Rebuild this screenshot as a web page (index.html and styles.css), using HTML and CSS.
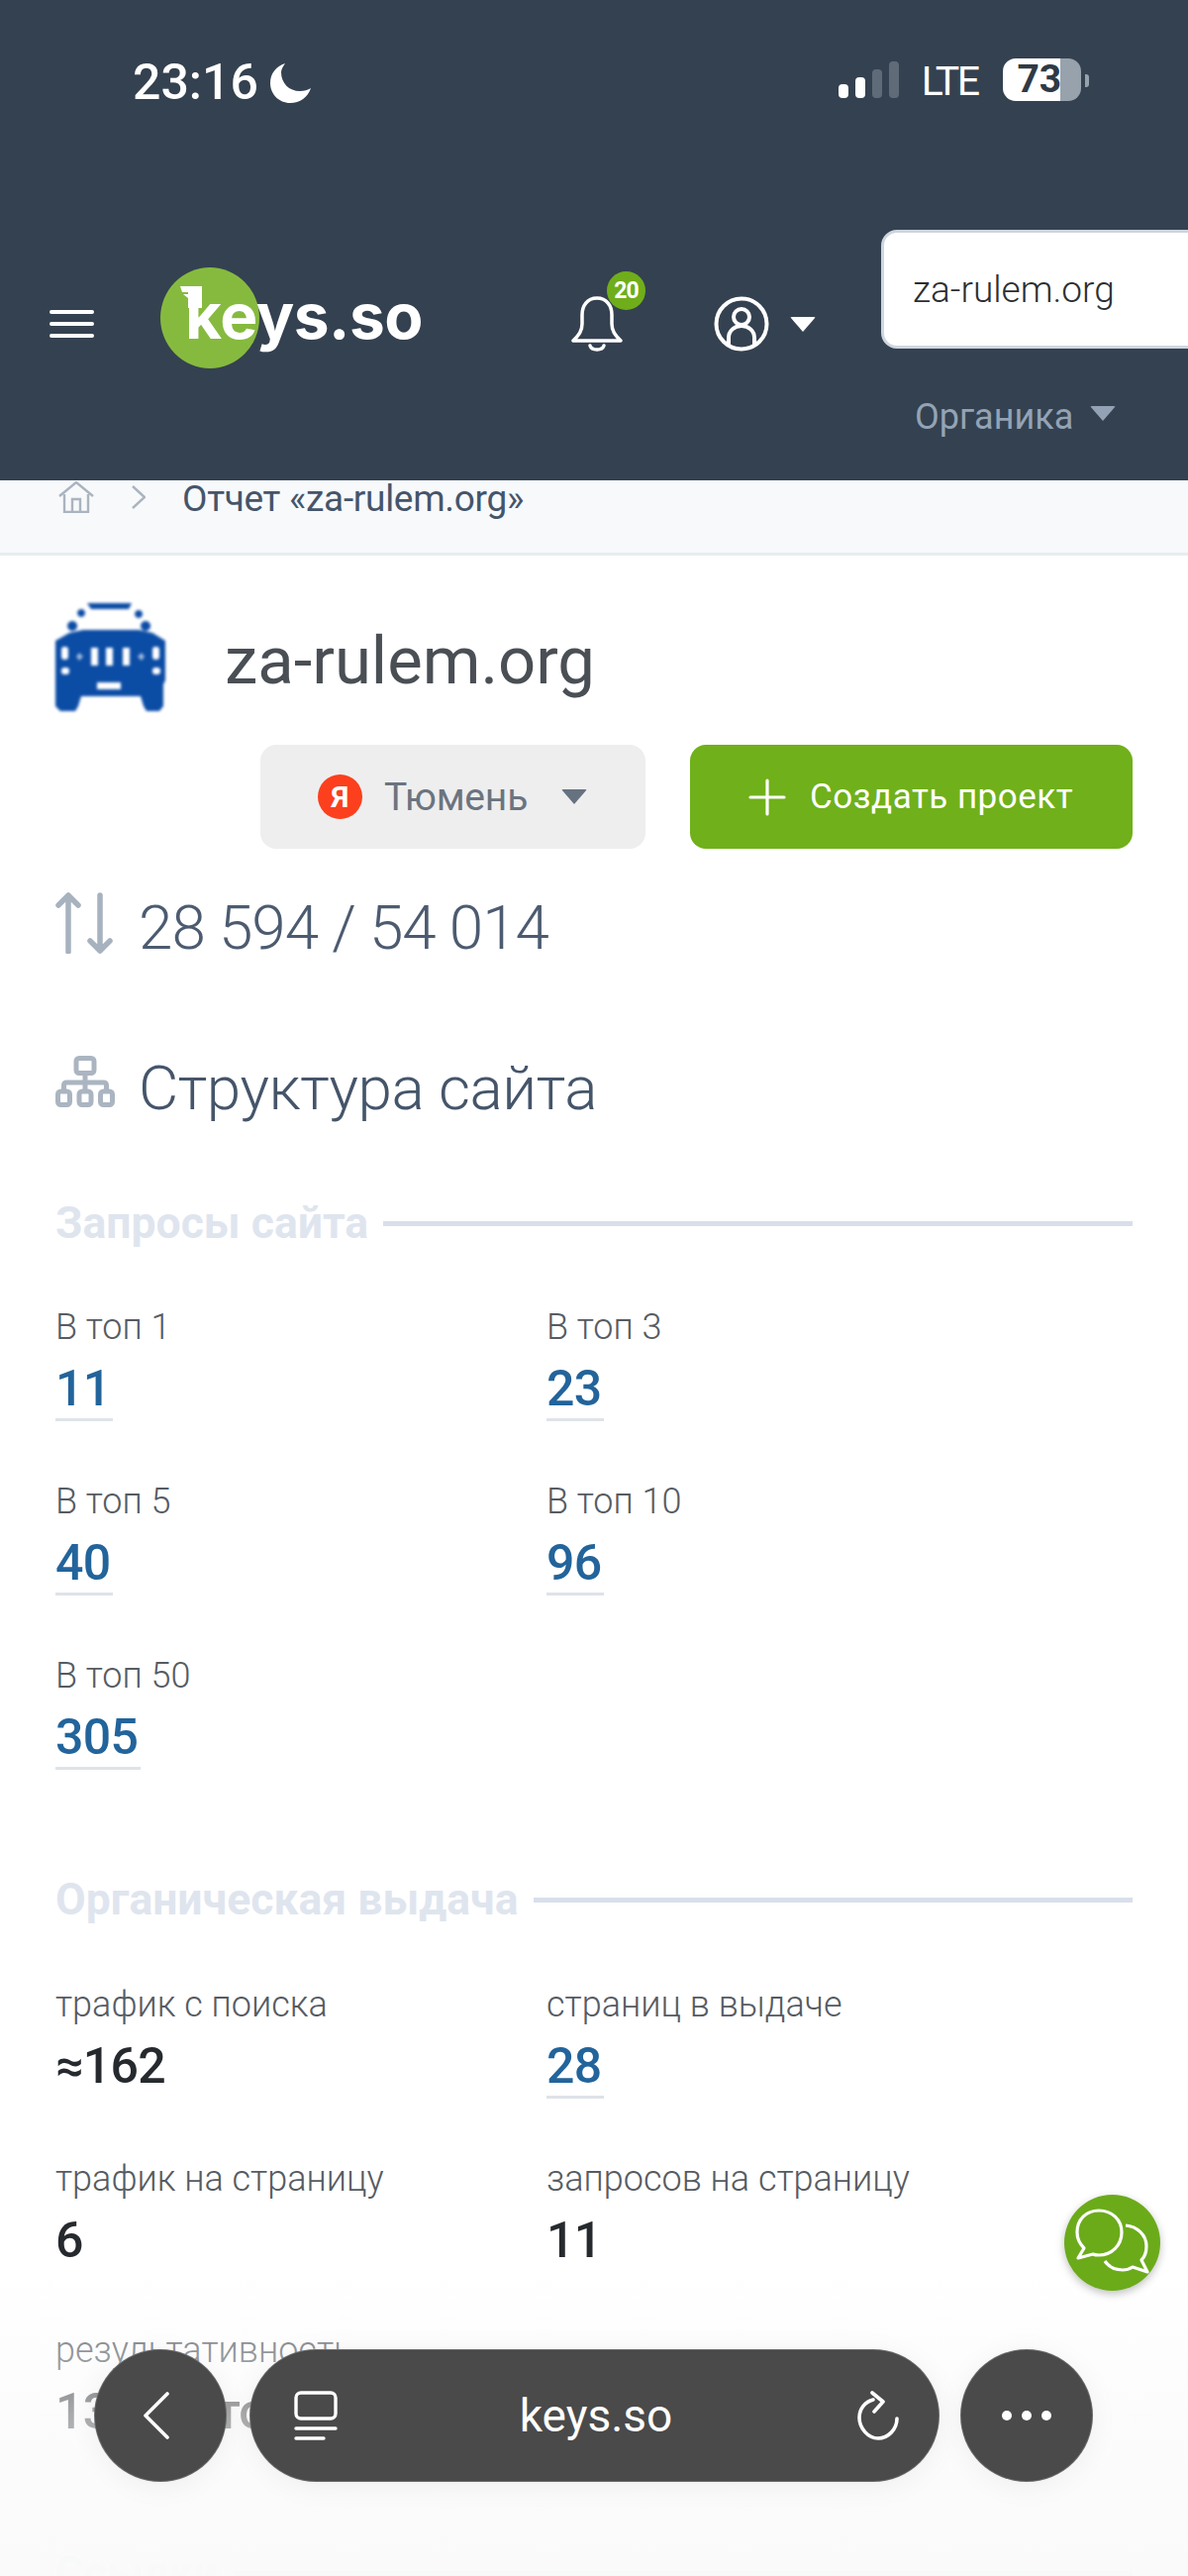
FILE: index.html
```html
<!DOCTYPE html>
<html lang="ru">
<head>
  <meta charset="UTF-8" />
  <meta name="viewport" content="width=device-width, initial-scale=1" />
  <title>Отчет «za-rulem.org»</title>
  <link rel="stylesheet" href="styles.css">
</head>
<body>

  <header class="header">
    <div class="statusbar">
      <div class="status-time">
        <span>23:16</span>
        <svg class="moon" viewBox="0 0 41 40"><path fill="#fff" d="M15 0C6 3 0 10 0 20c0 11 9 20 20 20 10 0 18-6 21-15-3 2-7 3-11 3-11 0-19-8-19-19 0-3 2-6 4-9z"/></svg>
      </div>
      <div class="status-right">
        <div class="signal">
          <span class="bar bar-1"></span>
          <span class="bar bar-2"></span>
          <span class="bar bar-3"></span>
          <span class="bar bar-4"></span>
        </div>
        <span class="lte">LTE</span>
        <div class="battery"><span class="battery-level">73</span></div>
      </div>
    </div>

    <div class="navbar">
      <div class="nav-icons">
        <div class="burger"><span></span><span></span><span></span></div>
        <a class="logo">
          <span class="logo-circle"></span>
          <svg class="logo-key" viewBox="0 0 22 22"><path fill="#fff" d="M0 0h22v22H8v-10L3 8h5V6H2z"/></svg>
          <span class="logo-text">keys.so</span>
        </a>
        <div class="bell">
          <svg viewBox="0 0 52 58"><g fill="none" stroke="#fff" stroke-width="3.5" stroke-linecap="round" stroke-linejoin="round"><path d="M26 4c-10 0-15 8-15 17v9c0 7-3 11-9 17h48c-6-6-9-10-9-17v-9C41 12 36 4 26 4z"/><path d="M19 52c1 3 4 4 7 4s6-1 7-4"/></g></svg>
          <span class="bell-badge">20</span>
        </div>
        <div class="user">
          <svg viewBox="0 0 56 56"><g fill="none" stroke="#fff" stroke-width="4"><circle cx="28" cy="28" r="25.500"/><circle cx="28" cy="21" r="8"/><path d="M15 50V42c0-7 6-12 13-12s13 5 13 12v8"/></g></svg>
          <span class="caret caret-white"></span>
        </div>
      </div>
      <div class="nav-search">
        <div class="search-input">za-rulem.org</div>
        <div class="search-type">Органика <span class="caret caret-grey"></span></div>
      </div>
    </div>
  </header>

  <nav class="breadcrumbs">
    <svg class="crumb-home" viewBox="0 0 36 32"><g fill="none" stroke="#aab4bf" stroke-width="2.4"><path d="M1 15 18 1l17 14"/><path d="M6 13v18h24V13"/><path d="M14 31V18h8v13"/></g></svg>
    <svg class="crumb-sep" viewBox="0 0 14 24"><path fill="none" stroke="#aab4bf" stroke-width="2.4" d="M1 1l12 11L1 23"/></svg>
    <span class="crumb-text">Отчет «za-rulem.org»</span>
  </nav>

  <main class="report">
    <div class="site-title">
      <svg class="favicon" viewBox="0 0 112 110">
        <path fill="#0b4ca5" d="M32 0h45l-3 6H36zM26 6a4 4 0 1 0 .1 0zM84 7a4 4 0 1 0 .1 0zM17 18a5 5 0 1 0 .1 0zM91 18a5 5 0 1 0 .1 0zM14 30l14-3h56l14 3 13 8v40l-2 4v22l-4 5H92l-3-5-3-10H26l-3 10-3 5H5l-5-5V38z"/>
        <g fill="#fff">
          <rect x="6" y="44" width="7" height="13" rx="3"/>
          <rect x="98" y="44" width="7" height="13" rx="3"/>
          <rect x="6" y="65" width="8" height="7" rx="3"/>
          <rect x="98" y="65" width="8" height="7" rx="3"/>
          <rect x="36" y="45" width="7" height="18"/>
          <rect x="51" y="45" width="7" height="18"/>
          <rect x="68" y="45" width="7" height="18"/>
          <path opacity="0.6" d="M24 50l4 4-4 4-3-4zM87 50l3 4-3 4-4-4z"/>
          <rect x="42" y="80" width="24" height="7"/>
        </g>
      </svg>
      <h1 class="site-name">za-rulem.org</h1>
    </div>

    <div class="actions">
      <button class="btn-region">
        <span class="ya-icon">Я</span>
        <span class="region-name">Тюмень</span>
        <span class="caret caret-dark"></span>
      </button>
      <button class="btn-create">
        <svg viewBox="0 0 38 38"><path fill="none" stroke="#fff" stroke-width="3.2" stroke-linecap="round" d="M19 2v34M2 19h34"/></svg>
        Создать проект
      </button>
    </div>

    <div class="visits">
      <svg class="icon-arrows" viewBox="0 0 60 62"><g fill="none" stroke="#a7b2bf" stroke-width="5.5" stroke-linecap="round" stroke-linejoin="round"><path d="M13 60V3M3 13 13 3l10 10"/><path d="M45 3v56M35 49l10 10 10-10"/></g></svg>
      <span class="visits-text">28 594 / 54 014</span>
    </div>

    <div class="structure-title">
      <svg class="icon-tree" viewBox="0 0 60 52"><g fill="none" stroke="#abb5c1" stroke-width="5" stroke-linejoin="round"><rect x="21" y="2.500" width="18" height="15" rx="3"/><rect x="2.500" y="36" width="12" height="13.500" rx="3"/><rect x="24" y="36" width="12" height="13.500" rx="3"/><rect x="45.500" y="36" width="12" height="13.500" rx="3"/><path d="M30 17v19M8.500 36v-6c0-2 1-3 3-3h37c2 0 3 1 3 3v6"/></g></svg>
      <h2>Структура сайта</h2>
    </div>

    <section class="stats-section">
      <h3 class="section-head"><span>Запросы сайта</span></h3>
      <div class="stats-grid">
        <div class="stat"><div class="stat-label">В топ 1</div><a class="stat-value link">11</a></div>
        <div class="stat"><div class="stat-label">В топ 3</div><a class="stat-value link">23</a></div>
        <div class="stat"><div class="stat-label">В топ 5</div><a class="stat-value link">40</a></div>
        <div class="stat"><div class="stat-label">В топ 10</div><a class="stat-value link">96</a></div>
        <div class="stat"><div class="stat-label">В топ 50</div><a class="stat-value link">305</a></div>
      </div>
    </section>

    <section class="stats-section section-organic">
      <h3 class="section-head"><span>Органическая выдача</span></h3>
      <div class="stats-grid">
        <div class="stat"><div class="stat-label">трафик с поиска</div><div class="stat-value">≈162</div></div>
        <div class="stat"><div class="stat-label">страниц в выдаче</div><a class="stat-value link">28</a></div>
        <div class="stat"><div class="stat-label">трафик на страницу</div><div class="stat-value">6</div></div>
        <div class="stat"><div class="stat-label">запросов на страницу</div><div class="stat-value">11</div></div>
        <div class="stat"><div class="stat-label">результативность</div><div class="stat-value">13 880 топ</div></div>
      </div>
    </section>

    <section class="stats-section section-links">
      <h3 class="section-head"><span>Ссылки</span></h3>
    </section>
  </main>

  <div class="bottom-fade"></div>

  <a class="chat-btn">
    <svg viewBox="0 0 76 70"><g fill="none" stroke="#fff" stroke-width="3.2" stroke-linejoin="round"><path d="M24 2C11 2 2 11 2 24c0 7 3 12 7 16L3 50l15-4c2 1 4 1 6 1 13 0 23-10 23-23S37 2 24 2z"/><path d="M51 17c11 1 21 9 21 21 0 6-2 11-5 14l6 12-15-5c-3 2-6 3-10 3-8 0-14-3-18-9"/></g></svg>
  </a>

  <div class="browser-bar">
    <button class="bar-round">
      <svg class="icon-back" viewBox="0 0 26 48"><path fill="none" stroke="#fff" stroke-width="3.6" stroke-linecap="round" stroke-linejoin="round" d="M24 2 2 24l22 22"/></svg>
    </button>
    <div class="bar-address">
      <svg class="icon-tabs" viewBox="0 0 44 50"><g fill="none" stroke="#fff" stroke-width="3.4" stroke-linecap="round"><rect x="2" y="2" width="40" height="26" rx="5"/><path d="M2 38h40M2 48h28"/></g></svg>
      <span class="address-text">keys.so</span>
      <svg class="icon-reload" viewBox="0 0 42 50"><g fill="none" stroke="#fff" stroke-width="3.6" stroke-linecap="round" stroke-linejoin="round"><path d="M16 9C8 11 2 18 2 27c0 11 9 21 19 21s19-9 19-20"/><path d="M15 2l11 9-9 10"/></g></svg>
    </div>
    <button class="bar-round">
      <span class="dots"><i></i><i></i><i></i></span>
    </button>
  </div>

</body>
</html>
```

FILE: styles.css
```css
body {
  margin: 0;
  width: 1200px;
  height: 2601px;
  position: relative;
  overflow: hidden;
  font-family: Roboto, "Liberation Sans", sans-serif;
  background: #fff;
  color: #45556a;
}

h1, h2, h3 {
  margin: 0;
  font-weight: 400;
}

button {
  border: none;
  font-family: inherit;
  cursor: pointer;
}

/* header */

.header {
  height: 485px;
  background: #344150;
  color: #fff;
  overflow: hidden;
}

.statusbar {
  height: 232px;
  box-sizing: border-box;
  padding-top: 59px;
  display: flex;
  align-items: flex-start;
}

.status-time {
  display: flex;
  align-items: center;
  gap: 12px;
  margin-left: 134px;
  margin-top: 3px;
  font-size: 50px;
  line-height: 43px;
  font-weight: 500;
}

.moon {
  width: 41px;
  height: 40px;
}

.status-right {
  display: flex;
  margin-left: 533px;
  height: 43px;
}

.signal {
  display: flex;
  align-items: flex-end;
  gap: 7px;
  height: 37px;
  margin-top: 3px;
}

.bar {
  width: 10px;
  border-radius: 4px;
  background: #fff;
}

.bar-1 { height: 14px; }
.bar-2 { height: 21px; }
.bar-3 { height: 29px; background: #5f6b78; }
.bar-4 { height: 37px; background: #5f6b78; }

.lte {
  margin-left: 23px;
  font-size: 41px;
  line-height: 47px;
  font-weight: 400;
  letter-spacing: -2.600px;
}

.battery {
  position: relative;
  width: 79px;
  height: 43px;
  margin-left: 26px;
  border-radius: 13px;
  background: linear-gradient(to right, #fff 73%, #98a2ad 73%);
}

.battery:after {
  content: "";
  position: absolute;
  top: 16px;
  right: -8px;
  width: 4px;
  height: 13px;
  border-radius: 0 3px 3px 0;
  background: #98a2ad;
}

.battery-level {
  display: block;
  margin-left: 14px;
  font-size: 39px;
  line-height: 43px;
  font-weight: 700;
  color: #2f3a46;
}

.navbar {
  display: flex;
  align-items: flex-start;
}

.nav-icons {
  display: flex;
  align-items: center;
  width: 890px;
  height: 110px;
  margin-top: 40px;
  flex-shrink: 0;
}

.burger {
  display: flex;
  flex-direction: column;
  gap: 8px;
  width: 45px;
  margin-left: 50px;
}

.burger span {
  height: 4px;
  border-radius: 2px;
  background: #fff;
}

.logo {
  position: relative;
  margin-left: 92px;
  margin-top: -17px;
  height: 80px;
  width: 243px;
}

.logo-circle {
  position: absolute;
  top: -9px;
  left: -25px;
  width: 100px;
  height: 102px;
  border-radius: 50%;
  background: #86ba3f;
}

.logo-key {
  position: absolute;
  top: 10px;
  left: -5px;
  width: 22px;
  height: 22px;
}

.logo-text {
  position: relative;
  display: block;
  font-family: Inter, Roboto, sans-serif;
  font-size: 64px;
  line-height: 80px;
  font-weight: 700;
  letter-spacing: -0.5px;
  color: #fff;
}

.bell {
  position: relative;
  width: 52px;
  height: 58px;
  margin-left: 147px;
  margin-top: -2px;
}

.bell svg {
  display: block;
  width: 52px;
  height: 58px;
}

.bell-badge {
  position: absolute;
  top: -23px;
  left: 36px;
  width: 39px;
  height: 39px;
  border-radius: 50%;
  background: #6fae1a;
  font-size: 23px;
  line-height: 39px;
  font-weight: 700;
  letter-spacing: -1px;
  text-align: center;
}

.user {
  display: flex;
  align-items: center;
  margin-left: 92px;
}

.user svg {
  width: 56px;
  height: 56px;
}

.caret {
  display: inline-block;
  width: 0;
  height: 0;
  border-left: 13px solid transparent;
  border-right: 13px solid transparent;
  border-top: 15px solid #fff;
  border-radius: 2px;
}

.caret-white { margin-left: 21px; }
.caret-grey { border-top-color: #93a3b5; margin-left: 17px; margin-bottom: 8px; }
.caret-dark { border-top-color: #667280; }

.nav-search {
  flex-shrink: 0;
}

.search-input {
  width: 400px;
  height: 120px;
  box-sizing: border-box;
  padding-left: 29px;
  border: 3px solid #cdd6e0;
  border-radius: 16px;
  background: #fff;
  color: #2b2f33;
  font-size: 37px;
  line-height: 116px;
  font-weight: 300;
}

.search-type {
  margin-top: 45px;
  margin-left: 34px;
  font-size: 36px;
  line-height: 48px;
  font-weight: 400;
  color: #93a3b5;
  display: flex;
  align-items: center;
}

/* breadcrumbs */

.breadcrumbs {
  height: 73px;
  display: flex;
  align-items: flex-start;
  background: #f7f9fb;
  border-bottom: 3px solid #e8ecef;
  padding-left: 59px;
}

.crumb-home {
  width: 36px;
  height: 32px;
  margin-top: 1px;
}

.crumb-sep {
  width: 14px;
  height: 24px;
  margin-left: 38px;
  margin-top: 5px;
}

.crumb-text {
  margin-left: 37px;
  margin-top: 1px;
  font-size: 37px;
  line-height: 36px;
  letter-spacing: -0.3px;
  color: #45556a;
}

/* report */

.report {
  padding: 48px 56px 0;
}

.site-title {
  display: flex;
  align-items: center;
}

.favicon {
  width: 112px;
  height: 110px;
  filter: blur(1.6px);
  flex-shrink: 0;
}

.site-name {
  margin-left: 59px;
  margin-top: 6px;
  font-size: 67px;
  line-height: 80px;
  color: #4a4f55;
}

.actions {
  display: flex;
  gap: 45px;
  margin-top: 33px;
  margin-left: 207px;
}

.btn-region {
  display: flex;
  align-items: center;
  width: 389px;
  height: 105px;
  padding: 0 0 0 58px;
  border-radius: 16px;
  background: #eeeeee;
}

.ya-icon {
  width: 45px;
  height: 45px;
  border-radius: 50%;
  background: #fc3f1d;
  color: #fff;
  font-size: 30px;
  line-height: 46px;
  font-weight: 700;
  text-align: center;
}

.region-name {
  margin-left: 22px;
  margin-right: 34px;
  font-size: 39px;
  letter-spacing: -0.2px;
  color: #6b7480;
}

.btn-create {
  display: flex;
  align-items: center;
  gap: 24px;
  width: 447px;
  height: 105px;
  padding: 0 0 0 59px;
  border-radius: 16px;
  background: #70b01a;
  color: #fff;
  font-size: 35px;
  letter-spacing: 0.5px;
}

.btn-create svg {
  width: 38px;
  height: 38px;
}

.visits {
  display: flex;
  align-items: flex-start;
  gap: 24px;
  margin-top: 42px;
  font-size: 62px;
  line-height: 64px;
  font-weight: 300;
  letter-spacing: -1px;
  color: #4c5b70;
}

.visits-text {
  margin-top: 6px;
}

.icon-arrows {
  width: 60px;
  height: 62px;
  margin-top: 2px;
}

.structure-title {
  display: flex;
  align-items: center;
  gap: 24px;
  margin-top: 95px;
}

.icon-tree {
  width: 60px;
  height: 52px;
  margin-bottom: 14px;
}

.structure-title h2 {
  font-size: 62px;
  line-height: 70px;
  font-weight: 300;
  letter-spacing: -0.45px;
  color: #45556a;
}

/* stats */

.stats-section {
  margin-top: 76px;
}

.section-organic {
  margin-top: 106px;
}

.section-organic .stats-grid {
  margin-top: 59px;
}

.section-links {
  margin-top: 108px;
}

.section-head {
  display: flex;
  align-items: center;
  gap: 15px;
  font-size: 44.500px;
  line-height: 50px;
  font-weight: 700;
  color: #dfe5ee;
}

.section-head:after {
  content: "";
  flex: 1;
  height: 5px;
  background: #d8dfeb;
}

.stats-grid {
  display: grid;
  grid-template-columns: 496px 1fr;
  row-gap: 59px;
  margin-top: 58px;
}

.stat-label {
  font-size: 36px;
  line-height: 44px;
  font-weight: 300;
  color: #565b62;
}

.stat-value {
  display: block;
  margin-top: 10px;
  font-size: 50px;
  line-height: 60px;
  font-weight: 500;
  letter-spacing: -0.7px;
  color: #262a2e;
}

.stat-value.link {
  display: table;
  padding-right: 3px;
  color: #22649b;
  border-bottom: 3px solid #dfe3e8;
}

/* floating bits over the page */

.bottom-fade {
  position: absolute;
  left: 0;
  right: 0;
  top: 2290px;
  bottom: 0;
  background: linear-gradient(to bottom, rgba(250, 250, 250, 0), rgba(250, 250, 250, 0.37) 27%, rgba(250, 250, 250, 0.62) 48%, rgba(250, 250, 250, 0.95) 96%);
}

.chat-btn {
  position: absolute;
  left: 1075px;
  top: 2216px;
  width: 97px;
  height: 97px;
  border-radius: 50%;
  background: #6bab1a;
  box-shadow: 0 3px 8px rgba(0, 0, 0, 0.25);
  display: flex;
  align-items: center;
  justify-content: center;
}

.chat-btn svg {
  width: 76px;
  height: 70px;
}

.browser-bar {
  position: absolute;
  left: 96px;
  top: 2373px;
  display: flex;
  gap: 25px;
}

.bar-round {
  width: 132px;
  height: 132px;
  padding: 0;
  border-radius: 50%;
  background: #4a4a4a;
  box-shadow: 0 0 0 1px #6a6a6a, 0 4px 30px rgba(0, 0, 0, 0.06);
  display: flex;
  align-items: center;
  justify-content: center;
}

.icon-back {
  width: 26px;
  height: 48px;
  margin-right: 9px;
}

.bar-address {
  position: relative;
  width: 695px;
  height: 132px;
  margin-right: -2px;
  border-radius: 66px;
  background: #4a4a4a;
  box-shadow: 0 0 0 1px #6a6a6a, 0 4px 30px rgba(0, 0, 0, 0.06);
  display: flex;
  align-items: center;
  box-sizing: border-box;
  padding: 0 40px 0 44px;
}

.icon-tabs {
  width: 44px;
  height: 50px;
}

.address-text {
  flex: 1;
  text-align: center;
  color: #fff;
  font-size: 46px;
  font-weight: 400;
  margin-left: -3px;
}

.icon-reload {
  width: 42px;
  height: 50px;
}

.dots {
  display: flex;
  gap: 10px;
}

.dots i {
  width: 10px;
  height: 10px;
  border-radius: 50%;
  background: #fff;
}
```
